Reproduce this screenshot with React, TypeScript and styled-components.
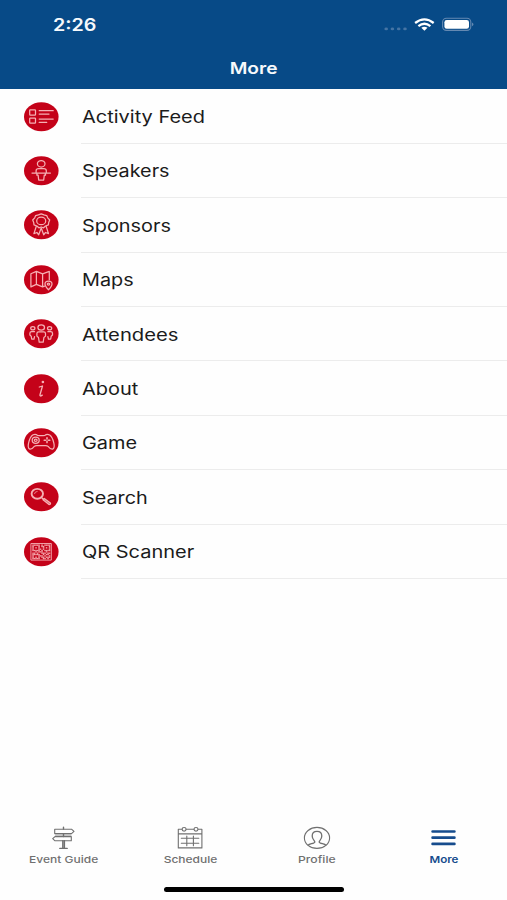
import React from "react";
import styled, { createGlobalStyle } from "styled-components";

const GlobalStyle = createGlobalStyle`
  * { box-sizing: border-box; }
  body { margin: 0; background: #fefefe; font-family: Inter, "Liberation Sans", sans-serif; }
`;

const Screen = styled.div`
  width: 507px;
  height: 900px;
  display: flex;
  flex-direction: column;
  background: #fefefe;
  overflow: hidden;
`;

const Header = styled.header`
  height: 89.4px;
  flex: none;
  display: flex;
  flex-direction: column;
  background: #074a87;
  color: #f6f9fc;
`;

const StatusBar = styled.div`
  height: 48px;
  display: flex;
  align-items: center;
  justify-content: space-between;
  padding: 1px 32px 0 53px;
`;

const Wide = styled.span<{ $scale: number; $origin?: string }>`
  display: inline-block;
  white-space: nowrap;
  transform: scaleX(${(p) => p.$scale});
  transform-origin: ${(p) => p.$origin ?? "left center"};
`;

const Clock = styled.div`
  font-size: 17px;
  font-weight: 600;
  line-height: 20px;
`;

const Title = styled.h1`
  margin: 0;
  height: 40px;
  padding-left: 1px;
  font-size: 16.5px;
  font-weight: 600;
  line-height: 40px;
  text-align: center;
`;

const List = styled.ul`
  flex: 1;
  margin: 0;
  padding: 0;
  list-style: none;
`;

const Row = styled.li`
  height: 54.4px;
  display: flex;
  align-items: stretch;
  padding-left: 24px;
`;

const Badge = styled.svg`
  width: 35px;
  height: 30px;
  flex: none;
  align-self: center;
  margin-right: 22px;
  fill: none;
  stroke: #f5b0b4;
  stroke-width: 1.25;
  stroke-linecap: round;
  stroke-linejoin: round;
`;

const RowLabel = styled.div`
  flex: 1;
  display: flex;
  align-items: center;
  padding: 2px 0 0 0.6px;
  border-bottom: 1px solid #ececec;
  color: #1b1b1b;
  font-size: 17px;
`;

const TabBar = styled.nav`
  height: 62.5px;
  flex: none;
  display: grid;
  grid-template-columns: repeat(4, 1fr);
`;

const Tab = styled.div<{ $active?: boolean }>`
  display: flex;
  flex-direction: column;
  align-items: center;
  color: ${(p) => (p.$active ? "#164c8d" : "#707070")};
  font-size: 9.6px;
  font-weight: ${(p) => (p.$active ? 600 : 500)};
  line-height: 12px;
`;

const TabIcon = styled.svg`
  width: 30px;
  height: 26px;
  margin-bottom: 3px;
  fill: none;
  stroke: currentColor;
  stroke-width: 1.1;
  stroke-linecap: round;
  stroke-linejoin: round;
`;

const HomeArea = styled.div`
  height: 13px;
  flex: none;
  display: flex;
  justify-content: center;
  padding-left: 1px;
`;

const HomeBar = styled.div`
  width: 180px;
  height: 5px;
  border-radius: 3px;
  background: #000;
`;

const qrRows = [
  "111110101111",
  "100010110001",
  "101010010101",
  "100011010001",
  "111110101111",
  "001011100100",
  "110100111011",
  "111110010110",
  "100011101001",
  "101010110111",
  "111110011010",
];

const items: { label: string; scale: number; art: React.ReactNode }[] = [
  {
    label: "Activity Feed",
    scale: 1.175,
    art: (
      <>
        <rect x="6" y="8" width="5.8" height="5.2" rx=".6" />
        <rect x="6" y="16.2" width="5.8" height="5.2" rx=".6" />
        <path d="M15.5 8.9H29.5M15.5 12.3H25.3M15.5 17.2H29.5M15.5 20.6H23" />
      </>
    ),
  },
  {
    label: "Speakers",
    scale: 1.165,
    art: (
      <>
        <ellipse cx="17.5" cy="8" rx="3.8" ry="3.2" />
        <path d="M12.4 16.8V14.9Q12.4 12.9 15 12.9H20Q22.6 12.9 22.6 14.9V16.8M8.3 17.3H26.7M13.2 17.5V19.4H14.4L15 24.2H20L20.6 19.4H21.8V17.5" />
      </>
    ),
  },
  {
    label: "Sponsors",
    scale: 1.17,
    art: (
      <>
        <path d="M17.5 4.1L20.3 5.1L23 5.8L24 8L26 10.2L25 12.7L24.7 15.1L21.8 16.2L19.8 18L17.5 17.2L15.2 18L13.2 16.2L10.3 15.1L10 12.7L9 10.2L11 8L12 5.8L14.7 5.1Z" />
        <ellipse cx="17.5" cy="11.1" rx="4.5" ry="3.8" />
        <path d="M12.6 16.5L10.2 23.8L13.2 22.7L15 25L17.5 18.2L20 25L21.8 22.7L24.8 23.8L22.4 16.5" />
      </>
    ),
  },
  {
    label: "Maps",
    scale: 1.165,
    art: (
      <>
        <path d="M7.2 9L12.7 6.6L18.9 9L25.6 6.6V15M7.2 9V22.1L12.7 19.6L18.9 22.1L20.8 21.4M12.7 6.6V19.6M18.9 9V22.1" />
        <path d="M24.8 25Q21.3 21.4 21.3 19.2A3.5 3 0 0 1 28.3 19.2Q28.3 21.4 24.8 25Z" />
        <ellipse cx="24.8" cy="19.3" rx="1.2" ry="1" />
      </>
    ),
  },
  {
    label: "Attendees",
    scale: 1.19,
    art: (
      <>
        <ellipse cx="17.5" cy="8.7" rx="3.3" ry="2.7" />
        <path d="M14.8 18.7L13.2 17.3V14.8Q13.2 13 15 13H20Q21.8 13 21.8 14.8V17.3L20.2 18.7L19.5 23.3H15.5Z" />
        <ellipse cx="9.1" cy="9.4" rx="2.1" ry="1.7" />
        <ellipse cx="25.9" cy="9.4" rx="2.1" ry="1.7" />
        <path d="M10.8 12.9H8Q6.2 12.9 6.2 14.5V16.3L7.5 17.4L8 20.2H10.3L10.8 17.8M24.2 12.9H27Q28.8 12.9 28.8 14.5V16.3L27.5 17.4L27 20.2H24.7L24.2 17.8" />
      </>
    ),
  },
  {
    label: "About",
    scale: 1.175,
    art: (
      <>
        <ellipse cx="19.2" cy="8.1" rx=".7" ry=".6" fill="#f5b0b4" />
        <path d="M15.6 13.2L18.8 12.2L16.3 21Q15.9 23.2 18.6 21.3" strokeWidth="1.3" />
      </>
    ),
  },
  {
    label: "Game",
    scale: 1.17,
    art: (
      <>
        <path d="M9 7.2Q11.8 6 13.7 7.5Q17.5 8.2 21.3 7.5Q23.2 6 26 7.2Q28.8 9.3 30.1 15Q31.4 20.4 28.8 21.4Q26.8 21.7 24.4 18.6Q23.5 17.7 22 17.7H13Q11.5 17.7 10.6 18.6Q8.2 21.7 6.2 21.4Q3.6 20.4 4.9 15Q6.2 9.3 9 7.2Z" />
        <ellipse cx="12" cy="12.4" rx="3.5" ry="3.1" />
        <ellipse cx="12" cy="12.4" rx="1.4" ry="1.2" />
        <path d="M23.3 10V11.2M23.3 13.6V14.8M20.5 12.4H21.9M24.7 12.4H26.1" strokeWidth="1.6" />
      </>
    ),
  },
  {
    label: "Search",
    scale: 1.165,
    art: (
      <>
        <ellipse cx="13.6" cy="12" rx="5.7" ry="4.9" strokeWidth="1.9" />
        <path d="M10.8 11.8Q11 9.8 13.5 9.6" strokeWidth=".7" />
        <path d="M17.8 15.7L19.5 17.2" strokeWidth="1.5" />
        <path d="M20.6 16.6L26.7 21.2Q27.3 22.6 25.3 22.8L19.3 18Z" fill="#e2656f" />
      </>
    ),
  },
  {
    label: "QR Scanner",
    scale: 1.175,
    art: (
      <>
        <rect x="7.6" y="6.7" width="20" height="16.6" strokeWidth=".9" />
        {qrRows.map((row, y) =>
          row.split("").map((cell, x) =>
            cell === "1" ? (
              <rect
                key={`${x}-${y}`}
                x={8.6 + x * 1.5}
                y={7.7 + y * 1.34}
                width="1.5"
                height="1.34"
                fill="#f3a5aa"
                stroke="none"
              />
            ) : null
          )
        )}
      </>
    ),
  },
];

const tabs: { label: string; scale: number; active?: boolean; art: React.ReactNode }[] = [
  {
    label: "Event Guide",
    scale: 1.25,
    art: (
      <>
        <path d="M6.7 4.2H23.5L26 6.4L23.5 8.6H6.7ZM7 11.6H23.3V15.8H7L4.7 13.7Z" />
        <path d="M15.5 2.3V4M15.5 8.6V11.6M14.8 15.8V23M16.4 15.8V23M11.8 23.4H19.2" strokeWidth="1.4" />
        <path d="M7.5 10.1H23" opacity=".55" />
      </>
    ),
  },
  {
    label: "Schedule",
    scale: 1.25,
    art: (
      <>
        <path d="M7 4.3H3.3V22.9H26.9V4.3H23.2M11.2 4.3H18.9M3.5 8.9H26.7" />
        <ellipse cx="9.1" cy="4.3" rx="2" ry="1.8" />
        <ellipse cx="21" cy="4.3" rx="2" ry="1.8" />
        <path d="M6.3 13.3H23.8M6.3 18.3H23.8M11.8 11V20.8M18.4 11V20.8" />
      </>
    ),
  },
  {
    label: "Profile",
    scale: 1.27,
    art: (
      <>
        <ellipse cx="15" cy="12.9" rx="12.6" ry="10.5" />
        <path d="M6.2 20.2C7.3 18.7 12.8 18.6 12.8 16.9C12.8 15.5 10.2 14.8 10.2 11.1C10.2 8.2 12 6.4 15 6.4S19.8 8.2 19.8 11.1C19.8 14.8 17.2 15.5 17.2 16.9C17.2 18.6 22.7 18.7 23.8 20.2" strokeWidth="1.3" />
      </>
    ),
  },
  {
    label: "More",
    scale: 1.21,
    active: true,
    art: <path d="M3.6 6.5H25.4M3.6 12.7H25.4M3.6 18.9H25.4" strokeWidth="2.7" />,
  },
];

function StatusIcons() {
  return (
    <svg width="92" height="20" viewBox="0 0 92 20" fill="none">
      <g fill="#4574a4">
        <ellipse cx="3.2" cy="13.9" rx="1.8" ry="1.4" />
        <ellipse cx="9.4" cy="13.9" rx="1.8" ry="1.4" />
        <ellipse cx="15.7" cy="13.9" rx="1.8" ry="1.4" />
        <ellipse cx="22" cy="13.9" rx="1.8" ry="1.4" />
      </g>
      <g stroke="#fff" strokeWidth="2.3">
        <path d="M32.1 8Q41.4 .8 50.7 8" />
        <path d="M35.4 11.1Q41.4 6.5 47.4 11.1" />
      </g>
      <path d="M38.3 12.8Q41.4 10.7 44.5 12.8L41.4 15.7Z" fill="#fff" />
      <rect x="59.6" y="3.3" width="28.2" height="12.1" rx="3.8" stroke="#6489b2" strokeWidth="1.1" />
      <rect x="61.4" y="5" width="24.6" height="8.8" rx="2.3" fill="#fff" />
      <path d="M89 7.5Q92 9.3 89 11.3Z" fill="#6489b2" />
    </svg>
  );
}

export default function App() {
  return (
    <>
      <GlobalStyle />
      <Screen>
        <Header>
          <StatusBar>
            <Clock>
              <Wide $scale={1.16}>2:26</Wide>
            </Clock>
            <StatusIcons />
          </StatusBar>
          <Title>
            <Wide $scale={1.16} $origin="center">More</Wide>
          </Title>
        </Header>
        <List>
          {items.map((item) => (
            <Row key={item.label}>
              <Badge viewBox="0 0 35 30">
                <ellipse cx="17.3" cy="14.8" rx="17.3" ry="14.5" fill="#c40219" stroke="none" />
                <g transform="translate(-.3 -.2)">{item.art}</g>
              </Badge>
              <RowLabel>
                <Wide $scale={item.scale}>{item.label}</Wide>
              </RowLabel>
            </Row>
          ))}
        </List>
        <TabBar>
          {tabs.map((tab) => (
            <Tab key={tab.label} $active={tab.active}>
              <TabIcon viewBox="0 0 30 26">{tab.art}</TabIcon>
              <Wide $scale={tab.scale} $origin="center">{tab.label}</Wide>
            </Tab>
          ))}
        </TabBar>
        <HomeArea>
          <HomeBar />
        </HomeArea>
      </Screen>
    </>
  );
}
